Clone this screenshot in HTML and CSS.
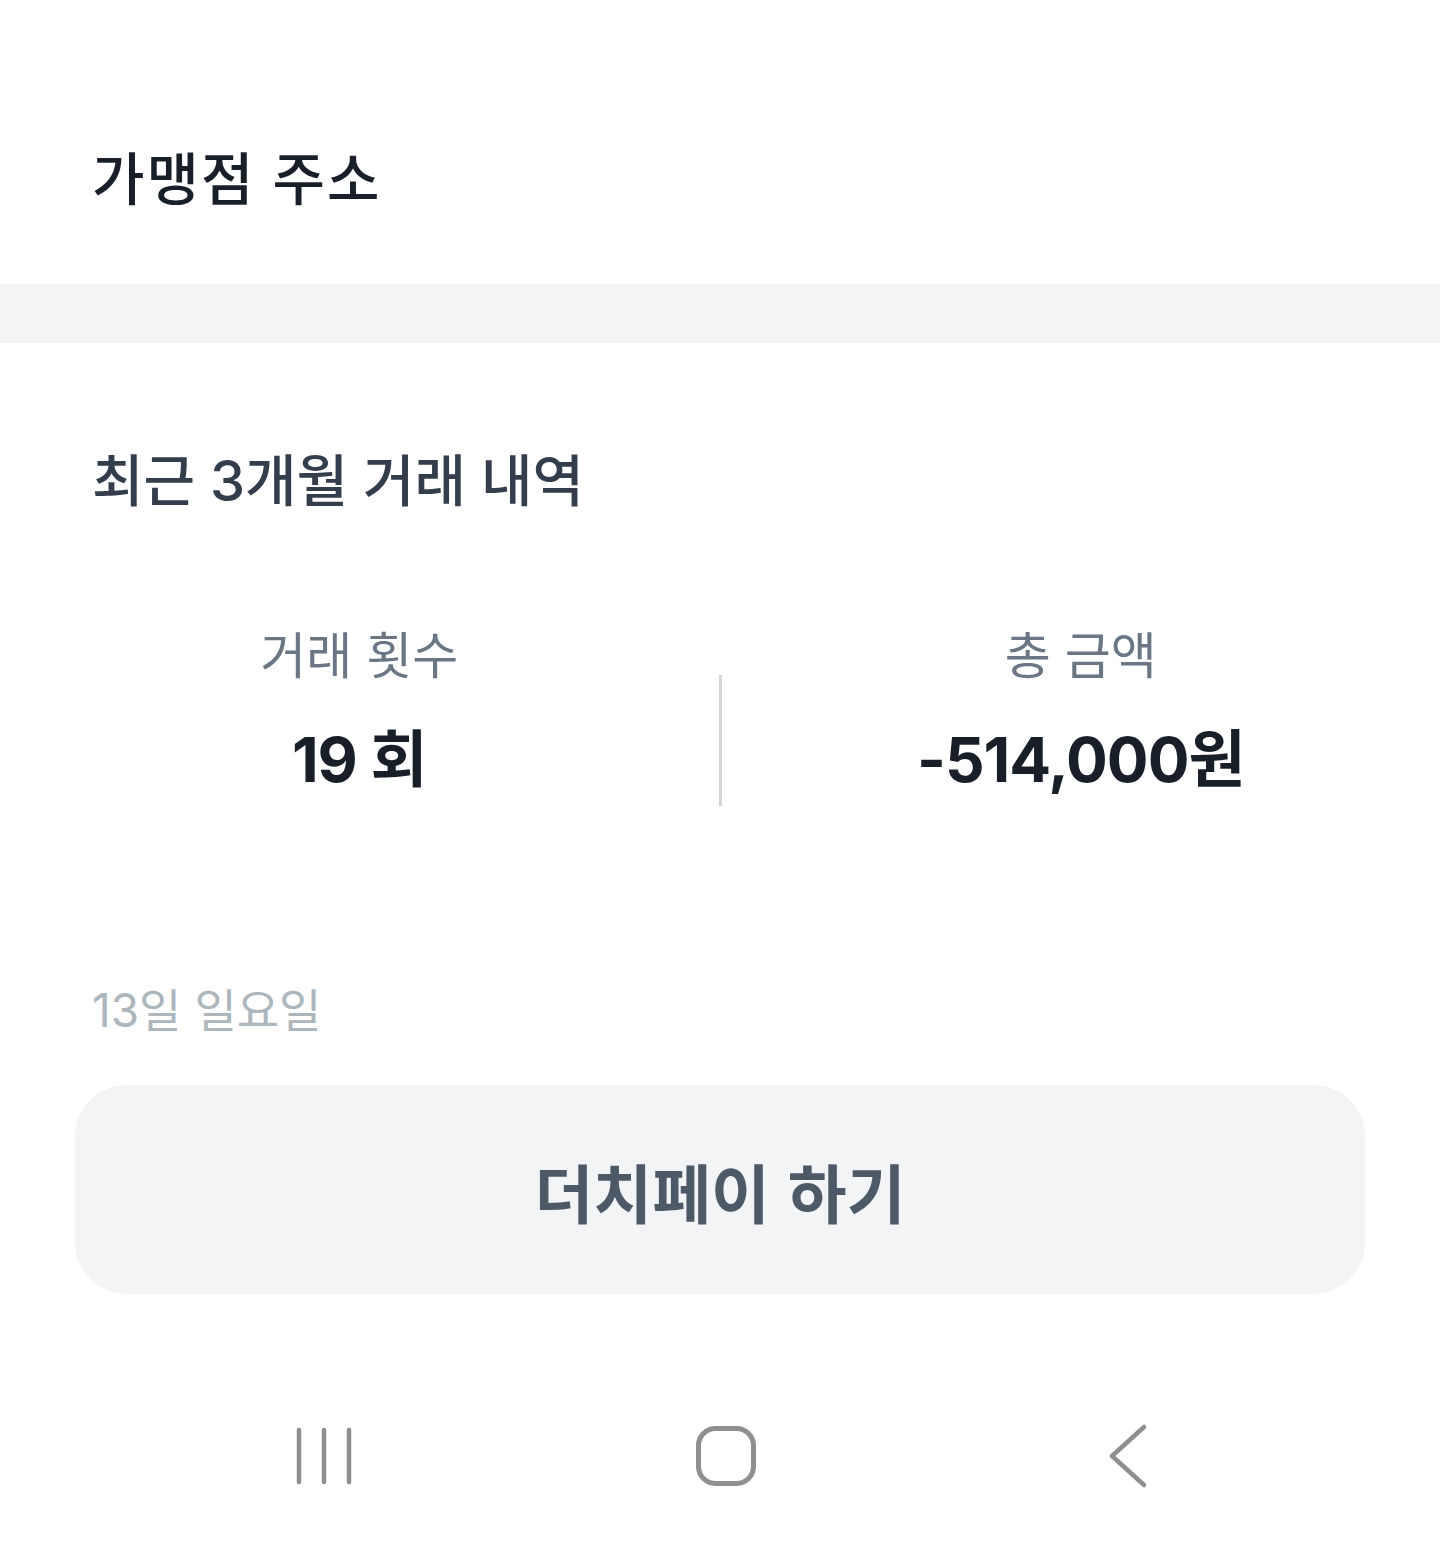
FILE: index.html
```html
<!DOCTYPE html>
<html lang="ko">
<head>
<meta charset="utf-8">
<title>가맹점 상세</title>
<link rel="stylesheet" href="styles.css">
</head>
<body>
<main class="page">
  <section class="address">
    <h1 class="address-title">가맹점 주소</h1>
  </section>
  <div class="band"></div>
  <section class="history">
    <h2 class="history-title">최근 3개월 거래 내역</h2>
    <div class="stats">
      <div class="stat">
        <div class="stat-label">거래 횟수</div>
        <div class="stat-value">19 회</div>
      </div>
      <div class="stat-divider"></div>
      <div class="stat">
        <div class="stat-label">총 금액</div>
        <div class="stat-value">-514,000원</div>
      </div>
    </div>
    <div class="date">13일 일요일</div>
    <div class="action">
      <button class="dutch-btn" type="button">더치페이 하기</button>
    </div>
  </section>
  <nav class="navbar">
    <span class="nav-item">
      <svg width="60" height="60" viewBox="0 0 60 60" aria-hidden="true">
        <g stroke="#8f8f8f" stroke-width="4.5" stroke-linecap="round" fill="none">
          <line x1="5" y1="4" x2="5" y2="56"/>
          <line x1="30" y1="4" x2="30" y2="56"/>
          <line x1="55" y1="4" x2="55" y2="56"/>
        </g>
      </svg>
    </span>
    <span class="nav-item">
      <svg width="62" height="62" viewBox="0 0 62 62" aria-hidden="true">
        <rect x="3.5" y="3.5" width="55" height="55" rx="17" ry="17" stroke="#8f8f8f" stroke-width="5" fill="none"/>
      </svg>
    </span>
    <span class="nav-item">
      <svg width="40" height="64" viewBox="0 0 40 64" aria-hidden="true">
        <polyline points="36,3 4,32 36,61" stroke="#8f8f8f" stroke-width="4.5" stroke-linecap="round" stroke-linejoin="round" fill="none"/>
      </svg>
    </span>
  </nav>
</main>
</body>
</html>
```

FILE: styles.css
```css
* { box-sizing: border-box; }
html, body { margin: 0; padding: 0; background: #ffffff; }
body {
  font-family: "Inter", "Noto Sans CJK KR", "Noto Sans", sans-serif;
  color: #191f28;
}
.page { width: 1440px; height: 1550px; display: flex; flex-direction: column; }

.address { padding: 146px 92px 70px; }
.address-title {
  margin: 0;
  font-size: 57px;
  line-height: 68px;
  font-weight: 500;
  letter-spacing: 2px;
  color: #191f28;
}

.band { height: 59px; background: #f2f4f6; }

.history { display: flex; flex-direction: column; }
.history-title {
  margin: 0;
  padding: 104px 92px 0;
  font-size: 56px;
  line-height: 68px;
  font-weight: 500;
  color: #333d4b;
}

.stats {
  margin-top: 111px;
  display: grid;
  grid-template-columns: 1fr 3px 1fr;
  align-items: center;
}
.stat { display: flex; flex-direction: column; align-items: center; }
.stat-label {
  font-size: 50px;
  line-height: 60px;
  font-weight: 400;
  color: #6b7684;
}
.stat-value {
  margin-top: 39px;
  font-size: 62px;
  line-height: 70px;
  font-weight: 700;
  color: #191f28;
  letter-spacing: -1px;
}
.stat-divider {
  width: 3px;
  height: 131px;
  background: #d1d6db;
  align-self: end;
  margin-bottom: -11px;
}

.date {
  margin-top: 187px;
  padding: 0 92px;
  font-size: 46px;
  line-height: 56px;
  color: #adb5bd;
}

.action { padding: 47px 75px 0; }
.dutch-btn {
  display: flex;
  align-items: center;
  justify-content: center;
  width: 100%;
  height: 209px;
  border: 0;
  border-radius: 52px;
  background: #f2f4f6;
  font-family: "Noto Sans CJK KR", "Noto Sans", sans-serif;
  font-size: 64px;
  font-weight: 700;
  color: #4e5968;
  padding: 0;
}

.navbar {
  margin-top: auto;
  padding: 0 0 62px 12px;
  display: flex;
  justify-content: center;
  align-items: center;
  gap: 282px;
}
.nav-item { width: 120px; display: flex; align-items: center; justify-content: center; }
.nav-item svg { display: block; }
```
